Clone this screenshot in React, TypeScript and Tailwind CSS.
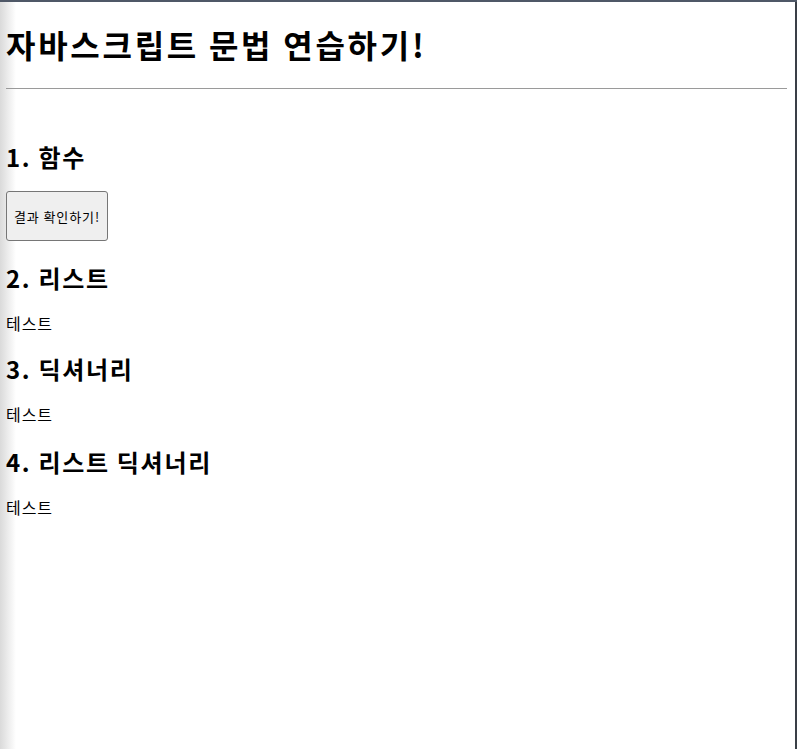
export default function App() {
  const sections = [
    { title: "2. 리스트", mt: "mt-[21px]" },
    { title: "3. 딕셔너리", mt: "mt-[18px]" },
    { title: "4. 리스트 딕셔너리", mt: "mt-[20px]" },
  ];

  return (
    <div
      className="flex h-screen w-full overflow-hidden border-t-2 border-[#4f5867] bg-white text-black"
      style={{ fontFamily: '"Noto Sans CJK KR", "Noto Sans", sans-serif' }}
    >
      <div className="w-[16px] shrink-0 bg-gradient-to-r from-[#dadada] to-white" />
      <main className="-ml-[10px] mr-[8px] flex-1">
        <h1 className="mt-[22px] text-[32px] font-bold leading-[40px] tracking-[0.085em]">
          자바스크립트 문법 연습하기!
        </h1>
        <hr className="mt-[24px] border-0 border-t border-[#9a9a9a]" />

        <h2 className="mt-[52px] text-[24px] font-bold leading-[32px] tracking-[0.07em]">
          1. 함수
        </h2>
        <button className="mt-[18px] h-[50px] w-[102px] rounded-[3px] border border-[#767676] bg-[#efefef] text-[13px] leading-none tracking-[0.07em]">
          결과 확인하기!
        </button>

        {sections.map((s) => (
          <section key={s.title}>
            <h2 className={`${s.mt} text-[24px] font-bold leading-[32px] tracking-[0.07em]`}>
              {s.title}
            </h2>
            <p className="mt-[17px] text-[16px] leading-[24px] tracking-[0.06em]">테스트</p>
          </section>
        ))}
      </main>
      <div className="w-[2px] shrink-0 bg-[#3a3f47]" />
    </div>
  );
}
